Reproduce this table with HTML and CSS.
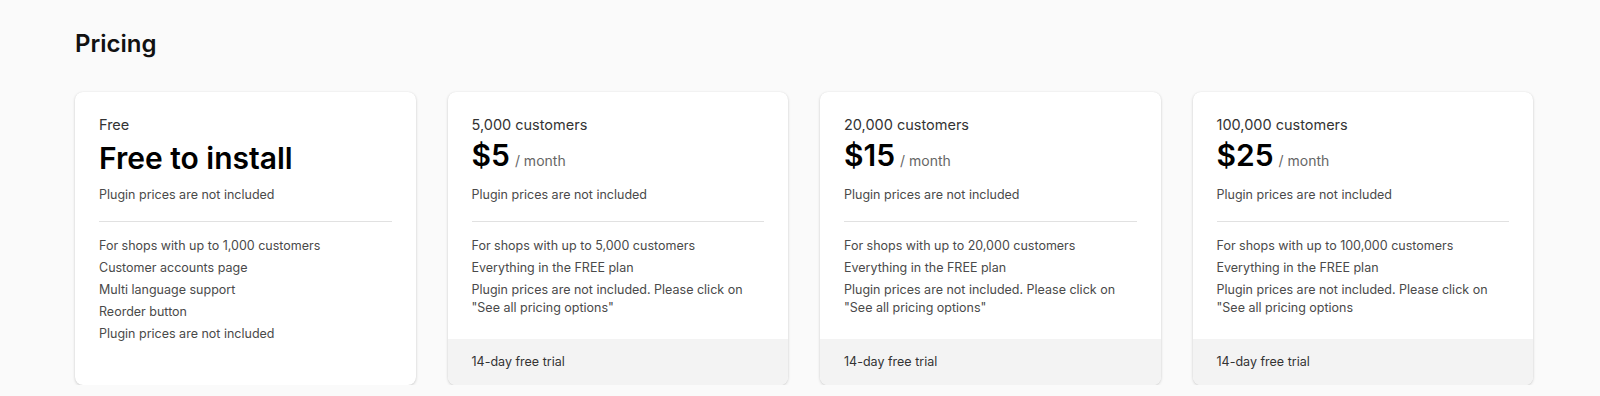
FILE: index.html
```html
<!DOCTYPE html>
<html lang="en">
<head>
<meta charset="utf-8">
<title>Pricing</title>
<link rel="stylesheet" href="styles.css">
</head>
<body>
<main class="page">
  <h2 class="page-title">Pricing</h2>
  <div class="plans">
    <section class="card">
      <div class="card-body">
        <div class="plan-label">Free</div>
        <div class="plan-title plan-title--text">Free to install</div>
        <div class="plan-note">Plugin prices are not included</div>
        <hr class="divider">
        <ul class="features">
          <li>For shops with up to 1,000 customers</li>
          <li>Customer accounts page</li>
          <li>Multi language support</li>
          <li>Reorder button</li>
          <li>Plugin prices are not included</li>
        </ul>
      </div>
    </section>
    <section class="card">
      <div class="card-body">
        <div class="plan-label">5,000 customers</div>
        <div class="plan-title"><span class="amount">$5</span><span class="period">/ month</span></div>
        <div class="plan-note">Plugin prices are not included</div>
        <hr class="divider">
        <ul class="features">
          <li>For shops with up to 5,000 customers</li>
          <li>Everything in the FREE plan</li>
          <li>Plugin prices are not included. Please click on "See all pricing options"</li>
        </ul>
      </div>
      <div class="card-footer">14-day free trial</div>
    </section>
    <section class="card">
      <div class="card-body">
        <div class="plan-label">20,000 customers</div>
        <div class="plan-title"><span class="amount">$15</span><span class="period">/ month</span></div>
        <div class="plan-note">Plugin prices are not included</div>
        <hr class="divider">
        <ul class="features">
          <li>For shops with up to 20,000 customers</li>
          <li>Everything in the FREE plan</li>
          <li>Plugin prices are not included. Please click on "See all pricing options"</li>
        </ul>
      </div>
      <div class="card-footer">14-day free trial</div>
    </section>
    <section class="card">
      <div class="card-body">
        <div class="plan-label">100,000 customers</div>
        <div class="plan-title"><span class="amount">$25</span><span class="period">/ month</span></div>
        <div class="plan-note">Plugin prices are not included</div>
        <hr class="divider">
        <ul class="features">
          <li>For shops with up to 100,000 customers</li>
          <li>Everything in the FREE plan</li>
          <li>Plugin prices are not included. Please click on "See all pricing options</li>
        </ul>
      </div>
      <div class="card-footer">14-day free trial</div>
    </section>
  </div>
</main>
</body>
</html>
```

FILE: styles.css
```css
* { box-sizing: border-box; }

html, body {
  margin: 0;
  padding: 0;
  background: #fafafa;
  font-family: Inter, "Noto Sans", "Liberation Sans", sans-serif;
  color: #202223;
}

.page {
  padding: 28px 67px 0 75px;
}

.page-title {
  margin: 0 0 32px 0;
  font-size: 24px;
  line-height: 32px;
  font-weight: 600;
  color: #111;
}

.plans {
  display: grid;
  grid-template-columns: repeat(4, 1fr);
  gap: 32px;
  align-items: stretch;
}

.card {
  background: #fff;
  border-radius: 8px;
  box-shadow: 0 1px 3px rgba(0, 0, 0, 0.18), 0 0 1px rgba(0, 0, 0, 0.08);
  display: flex;
  flex-direction: column;
  overflow: hidden;
}

.card-body {
  padding: 24px 24px 22px 24px;
  flex: 1;
}

.plan-label {
  font-size: 14.5px;
  line-height: 18px;
  color: #333;
}

.plan-title {
  margin-top: 4px;
  font-size: 30px;
  line-height: 34px;
  height: 34px;
  font-weight: 600;
  color: #000;
}

.plan-title--text {
  margin-top: 7px;
}

.amount {
  font-size: 30px;
}

.period {
  margin-left: 5px;
  font-size: 14px;
  line-height: 18px;
  font-weight: 400;
  color: #666;
}

.plan-note {
  margin-top: 14px;
  font-size: 12.5px;
  line-height: 18px;
  color: #4a4a4a;
}

.plan-title--text + .plan-note {
  margin-top: 11px;
}

.divider {
  border: 0;
  border-top: 1px solid #e1e1e1;
  margin: 17px 0 15px 0;
}

.features {
  list-style: none;
  margin: 0;
  padding: 0;
  display: flex;
  flex-direction: column;
  gap: 4px;
}

.features li {
  font-size: 12.5px;
  line-height: 18px;
  color: #4a4a4a;
}

.card-footer {
  background: #f3f3f3;
  height: 46px;
  padding: 0 24px;
  display: flex;
  align-items: center;
  font-size: 12.5px;
  line-height: 18px;
  color: #333;
}
```
